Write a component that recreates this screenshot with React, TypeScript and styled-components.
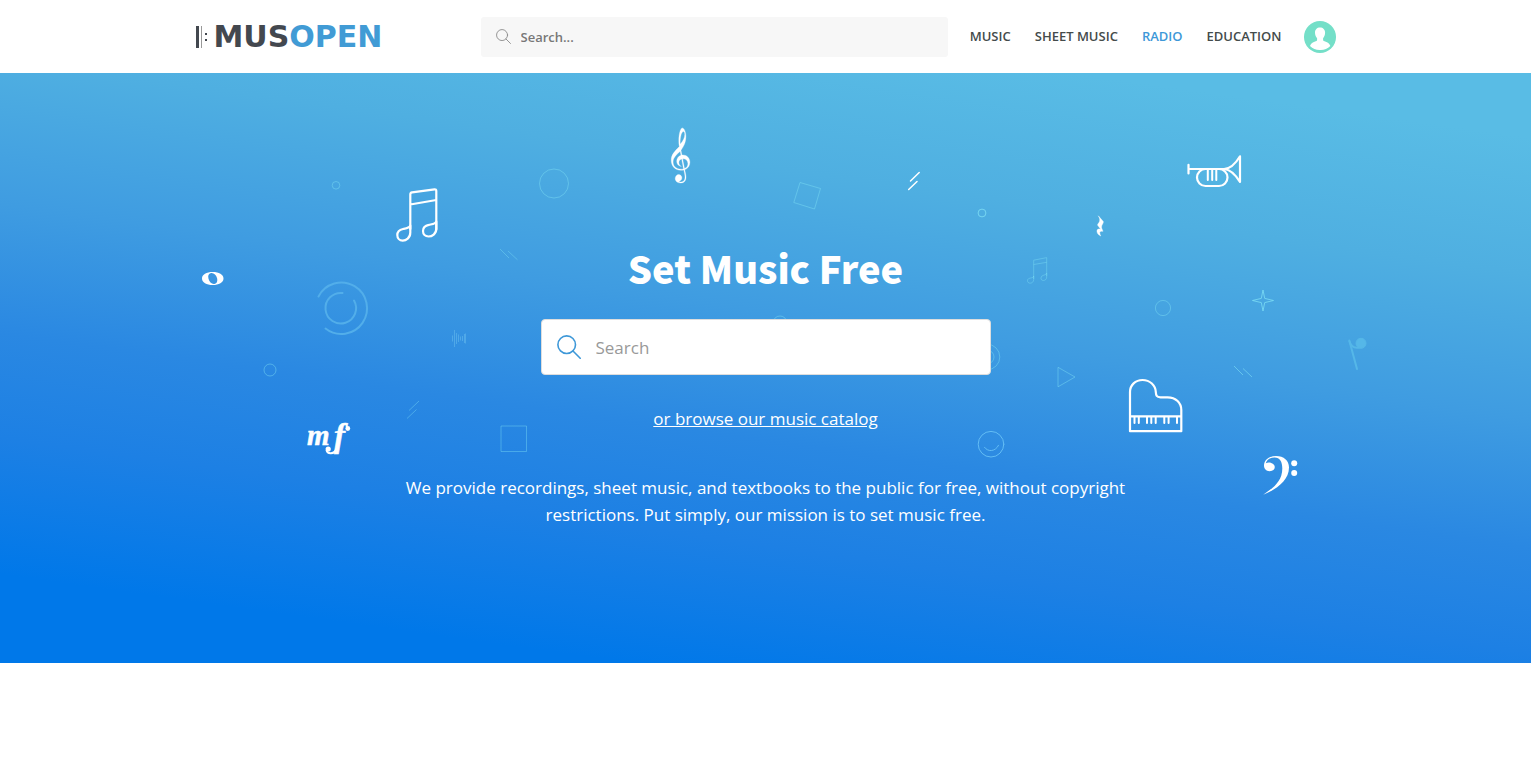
import React from 'react';
import styled, { createGlobalStyle } from 'styled-components';

const GlobalStyle = createGlobalStyle`
  *, *::before, *::after { box-sizing: border-box; }
  body {
    margin: 0;
    background: #fff;
    font-family: "Open Sans", "Noto Sans", sans-serif;
    color: #43484d;
  }
`;

const Header = styled.header`
  background: #fff;
  padding: 0 24px;
`;

const HeaderInner = styled.div`
  display: flex;
  align-items: center;
  max-width: 1140px;
  height: 73px;
  margin: 0 auto;
`;

const Brand = styled.a`
  display: flex;
  align-items: center;
  flex: 0 0 285px;
  gap: 5px;
  color: #43484f;
  text-decoration: none;
`;

const BrandMark = styled.svg`
  display: block;
  width: 13px;
  height: 22px;
`;

const BrandName = styled.span`
  font: 700 30px/36px "DejaVu Sans", Inter, sans-serif;

  b {
    font-weight: inherit;
    color: #419bd5;
  }
`;

const HeaderSearch = styled.form`
  display: flex;
  align-items: center;
  flex: 1 1 auto;
  height: 40px;
  padding: 0 15px;
  gap: 10px;
  border-radius: 3px;
  background: #f7f7f7;
`;

const HeaderInput = styled.input`
  flex: 1;
  min-width: 0;
  height: 40px;
  padding: 0;
  border: 0;
  outline: 0;
  background: transparent;
  font: 600 13px/20px "Open Sans", "Noto Sans", sans-serif;
  color: #43484d;

  &::placeholder { color: #777; opacity: 1; }
`;

const Nav = styled.nav`
  display: flex;
  align-items: center;
  gap: 24px;
  margin-left: 22px;
  padding-bottom: 2px;
`;

const NavLink = styled.a<{ $active?: boolean }>`
  font-size: 13px;
  line-height: 20px;
  font-weight: 600;
  white-space: nowrap;
  text-decoration: none;
  color: ${(p) => (p.$active ? '#3e98d8' : '#444b4b')};
`;

const AvatarButton = styled.button`
  display: block;
  width: 32px;
  height: 32px;
  margin-left: 22px;
  padding: 0;
  border: 0;
  border-radius: 50%;
  background: #74dfc8;
  overflow: hidden;
  cursor: pointer;

  svg { display: block; }
`;

const Hero = styled.section`
  position: relative;
  display: flex;
  flex-direction: column;
  align-items: center;
  min-height: 590px;
  padding: 167px 24px 120px;
  overflow: hidden;
  text-align: center;
  color: #fff;
  background: linear-gradient(
    8deg,
    #0078e9 11%,
    #1d80e4 28%,
    #2a88e2 41%,
    #3f9ce1 57%,
    #4fafe1 75%,
    #59bce5 92%
  );
`;

const Backdrop = styled.div`
  position: absolute;
  inset: 0;
  display: flex;
  justify-content: center;
  pointer-events: none;

  svg {
    flex: none;
    display: block;
    width: 1231px;
    height: 590px;
  }
`;

const HeroTitle = styled.h1`
  position: relative;
  margin: 0;
  font: 900 38px/56px "Noto Sans CJK JP", "Noto Sans CJK SC", "Open Sans", sans-serif;
`;

const HeroSearch = styled.form`
  position: relative;
  display: flex;
  align-items: center;
  width: 100%;
  max-width: 450px;
  height: 56px;
  margin-top: 23px;
  padding: 0 15px;
  gap: 15px;
  border: 1px solid #ddd;
  border-radius: 4px;
  background: #fff;
`;

const HeroInput = styled.input`
  flex: 1;
  min-width: 0;
  height: 54px;
  padding: 0;
  border: 0;
  outline: 0;
  background: transparent;
  font: 400 17px/24px "Open Sans", "Noto Sans", sans-serif;
  color: #43484d;

  &::placeholder { color: #999; opacity: 1; }
`;

const CatalogLink = styled.a`
  position: relative;
  margin-top: 30px;
  font-size: 17px;
  line-height: 27px;
  color: #fff;
  text-decoration: underline;
`;

const Mission = styled.p`
  position: relative;
  max-width: 740px;
  margin: 42px 0 0;
  font-size: 17px;
  line-height: 27px;
`;

const Magnifier = ({ size, color, weight }: { size: number; color: string; weight: number }) => (
  <svg width={size} height={size} viewBox="0 0 24 24" fill="none" stroke={color} strokeWidth={weight} strokeLinecap="round" aria-hidden="true">
    <circle cx="9.7" cy="9.7" r="8.8" />
    <path d="M16 16l7.2 7.2" />
  </svg>
);

const Illustration = () => (
  <svg viewBox="150 73 1231 590" fill="none" aria-hidden="true">
    <g stroke="#fff" strokeWidth="2.2" strokeLinecap="round" strokeLinejoin="round">
      {/* beamed notes */}
      <path d="M410.300 229 V194.500 q0-1.800 1.800-2.100 L434.500 189.300 q1.800-.2 1.800 1.600 V229.500 M410.300 204.500 L436.300 200" />
      <path d="M410.300 225.500 V232.500 C410.300 238 406 240.600 402.700 240.600 C399.500 240.600 397.300 238.400 397.300 235 C397.300 231.500 399.500 229.800 403 229 C407 228.200 409.800 227.800 410.300 225.500z" />
      <path d="M436.300 221.500 V228.500 C436.300 234 432 236.500 428.500 236.500 C425.300 236.500 423 234.300 423 231 C423 227.500 425.300 225.600 428.800 224.900 C432.800 224 435.800 223.800 436.300 221.500z" />
      {/* trumpet */}
      <path d="M1188.500 164.800v8.600 M1188.500 169H1224 C1231.500 168.800 1236 163 1240 156.300 V182 C1236 175.500 1231.500 169.500 1224 169" />
      <rect x="1197" y="169" width="30.500" height="17" rx="8.500" />
      <path d="M1207.800 169.500v10.500 M1212.200 169.500v10.500 M1216.300 169.500v10.500" strokeWidth="2" />
      {/* grand piano */}
      <path d="M1130 392 C1130 385 1135.500 380 1142.500 380 C1150 380 1155.500 385.500 1155.800 392 C1156 395.500 1156.500 397.300 1160.500 397.300 H1167.500 C1176 397.300 1181.300 403 1181.300 410 V431.200 H1130z M1130 416.300H1181" />
      <path d="M1134.500 417v6 M1138.800 417v6 M1147 417v6 M1151.300 417v6 M1155.700 417v6 M1164.300 417v6 M1168.600 417v6 M1177 417v6" strokeWidth="2" />
      <path d="M910.500 181l8.700-8.500 M908.700 189.500l8.300-8" strokeWidth="1.500" />
    </g>

    <g fill="#fff">
      {/* whole note */}
      <path fillRule="evenodd" d="M212.700 272 C219 272 223.500 274.500 223.500 278.500 C223.500 282.500 219 285 212.700 285 C206.500 285 202 282.500 202 278.500 C202 274.500 206.500 272 212.700 272z M211 273.100 C208.500 273.500 207.700 275.800 208.500 278.800 C209.300 282 211.600 284.200 214.300 283.900 C217 283.600 217.800 281 217 278 C216.200 275 213.800 272.700 211 273.100z" />
      {/* treble clef */}
      <path stroke="#fff" strokeWidth=".3" fillRule="evenodd" d="M681.900 127.900 C684.200 127.700 685.900 132 685.900 136.500 C685.900 142.500 683.600 146.400 681 150.300 L681.900 155 C686.900 154.500 689.900 158.200 689.900 162.300 C689.900 166 687.800 168.600 684.700 169.700 C685.500 173 686 175.300 686 177.200 C686 180.900 684 183 680.500 183 C677.400 183 675.200 181.100 675.200 178.600 C675.200 176.200 676.900 174.500 678.700 174.500 C680.500 174.500 681.900 175.900 681.900 177.800 C681.900 179.600 680.700 181 679 181.200 C679.700 182 680.500 182.100 681.200 182 C684 181.700 685 180 685 177.100 C685 175.300 684.500 173 683.800 170 C676.500 171.600 671.200 167 671.200 160.300 C671.200 154.700 674.700 151.200 679.300 146.600 C678.900 144.500 678.700 142.500 678.800 140.500 C678.900 133.500 680.300 129.300 681.900 127.900z M683.200 131.500 C681.100 132.300 679.900 138.500 680.200 144.300 C683.200 140.800 684.700 137.800 684.800 134.500 C684.800 132.500 684.200 131.200 683.200 131.500z M680.200 151.300 C675.800 155.200 673 158.300 673.100 162.200 C673.200 167.200 677.800 170 683.500 168.900 L681.700 159 C679.300 159.500 678.500 161.600 679 163.500 C679.300 164.900 680.200 165.800 681.400 166.500 C678.200 166 676.700 163.900 676.700 161.300 C676.700 158.300 678.500 156 681 155.200z M682.600 158.900 L684.500 168.600 C686.900 167.600 688.100 165.800 687.900 163.300 C687.700 160.500 685.500 158.500 682.600 158.900z" />
      {/* quarter rest */}
      <path stroke="#fff" strokeWidth=".4" d="M1098.300 215.800 L1103.300 221.500 C1103.800 223 1101.500 225 1101.500 227 C1101.500 228.500 1102.500 229.700 1103 231.300 C1100.700 230.800 1099.500 231.500 1099.800 233 C1100 234.300 1100.300 235.200 1100.800 236 C1098.300 235 1096.500 232.500 1097 230.500 C1097.400 229 1099 228.700 1100.700 229.300 L1097.500 225 C1098 223.500 1099.800 222 1099.800 220 C1099.800 218.500 1099 217 1098.300 215.800z" />
      {/* bass clef */}
      <path d="M1263.200 494.800 C1272 488.800 1282.300 482 1282.300 468.500 C1282.300 461.500 1280 457.400 1274.500 457.400 C1270 457.400 1266.500 459.700 1265.800 463.300 C1267.200 462.600 1268.300 462.500 1269.500 462.600 C1272.500 462.700 1274.800 464.500 1274.800 467 C1274.800 469.600 1272.500 471.200 1269.500 471.200 C1266.200 471.200 1264 469 1264 465.600 C1264 460 1269.200 456 1276 456 C1283.800 456 1289 460.500 1289 467.500 C1289 481 1275.500 489.800 1263.200 494.800z" />
      <circle cx="1294.200" cy="463.200" r="3" />
      <circle cx="1294.200" cy="473" r="3" />
      {/* mezzo-forte mark with its round terminals */}
      <text x="307" y="445" fontFamily="Liberation Serif, serif" fontSize="29" fontWeight="700" fontStyle="italic" stroke="#fff" strokeWidth=".5">
        m<tspan x="334" y="447" fontSize="33">f</tspan>
      </text>
      <circle cx="347.800" cy="428.500" r="2.400" />
      <circle cx="328.200" cy="449" r="2.600" />
      <path d="M326.500 450C327.500 454.500 334 455 337 448" stroke="#fff" strokeWidth="2" fill="none" />
    </g>

    <g stroke="#7fe0f5" strokeWidth="1" strokeOpacity=".45" strokeLinejoin="round">
      <circle cx="336" cy="185.300" r="3.800" />
      <circle cx="554" cy="183.500" r="14.500" />
      <path d="M800 182.500l20.500 6-6 20.500-20.700-6.500z" />
      <circle cx="982" cy="213" r="3.900" strokeOpacity=".8" />
      <circle cx="1163" cy="308" r="7.600" />
      <circle cx="270" cy="370" r="6" />
      <circle cx="780" cy="323" r="7" />
      <circle cx="987" cy="357" r="12.800" />
      <circle cx="987" cy="357" r="7" />
      <path d="M1058 367.300v19.500l17-9.800z" />
      <path d="M1263 290l1.700 8.400 8.800 2.100-8.800 2.100-1.700 8.400-1.700-8.400-8.800-2.100 8.800-2.100z" strokeOpacity=".75" />
      <path d="M500 249l9 9 M508 251l9.500 8.800" strokeOpacity=".4" />
      <path d="M409 410.500l10-9.500 M407 418.500l9.500-9" strokeOpacity=".4" />
      <path d="M1234 366l9 9 M1243 368.500l9 8.500" strokeOpacity=".6" />
      <rect x="501" y="426" width="25.500" height="25.500" strokeOpacity=".4" />
      <path d="M1033.700 279V260.200l13-2.600v18.500 M1033.700 264.500l13-2.200" strokeOpacity=".4" />
      <path d="M1033.700 276v3.500c0 2.500-2 3.700-3.600 3.700s-2.600-1-2.600-2.600c0-3.500 6-1.800 6.200-4.600z M1046.700 273v4c0 2.500-2 3.500-3.400 3.500s-2.400-1-2.400-2.500c0-3.500 5.500-2.200 5.800-5z" strokeOpacity=".4" />
    </g>

    <g stroke="#63bdf5" strokeLinecap="round">
      <circle cx="991" cy="444.200" r="12.800" strokeWidth="1" />
      <path d="M984.500 447.300c3 4.500 10.500 5 14-2" strokeWidth="1" />
      <path d="M318.500 296.500A25.700 25.700 0 1 1 325.500 328.500" stroke="#52aeea" strokeWidth="2" />
      <path d="M342.500 293A15.300 15.300 0 1 0 354 300.500" stroke="#52aeea" strokeWidth="2" />
    </g>

    {/* sound wave */}
    <path d="M452.500 335.500v6M454.500 330v17M456.500 333v11M458.500 334.500v7.500M460.500 336.500v4M462.500 336v5M464.500 334v9M465.500 333.500v10" stroke="#4fa8e8" strokeWidth="1" />

    {/* eighth rest */}
    <g stroke="#55b7e8" fill="#55b7e8">
      <circle cx="1361" cy="343.300" r="5" />
      <path d="M1349.300 340.500L1357 369" strokeWidth="2" strokeLinecap="round" />
      <path d="M1349.300 341c1.500 5.500 5.500 7.500 10.500 6.500" fill="none" strokeWidth="2" />
    </g>
  </svg>
);

export default function App() {
  return (
    <>
      <GlobalStyle />
      <Header>
        <HeaderInner>
          <Brand href="#" aria-label="Musopen home">
            <BrandMark viewBox="0 0 13 22" aria-hidden="true">
              <path d="M0 0h3v22H0z" fill="#43484f" />
              <path d="M5 0h1v22H5z" fill="#999" />
              <path d="M9 7h2v2H9zM9 13h2v2H9z" fill="#43484f" />
            </BrandMark>
            <BrandName>MUS<b>OPEN</b></BrandName>
          </Brand>
          <HeaderSearch role="search">
            <Magnifier size={15} color="#888" weight={1.4} />
            <HeaderInput type="text" placeholder="Search..." aria-label="Search the site" />
          </HeaderSearch>
          <Nav aria-label="Main">
            <NavLink href="#music">MUSIC</NavLink>
            <NavLink href="#sheetmusic">SHEET MUSIC</NavLink>
            <NavLink href="#radio" $active>RADIO</NavLink>
            <NavLink href="#education">EDUCATION</NavLink>
          </Nav>
          <AvatarButton type="button" aria-label="Account">
            <svg width="32" height="32" viewBox="0 0 32 32" fill="#fff" aria-hidden="true">
              <path d="M16 6.500c3 0 5.100 2 5.100 5.300 0 2-.8 4.200-2 5.400v1.600c0 1 .8 1.400 2.700 2 2.500.9 4 2.500 4.500 4.200A13.600 13.600 0 0 1 16 29 13.600 13.600 0 0 1 6 25c.5-1.700 2-3.300 4.500-4.200 1.900-.6 2.600-1 2.600-2v-1.600c-1.300-1.200-2.100-3.400-2.100-5.400 0-3.300 2-5.300 5-5.300z" />
            </svg>
          </AvatarButton>
        </HeaderInner>
      </Header>
      <main>
        <Hero>
          <Backdrop><Illustration /></Backdrop>
          <HeroTitle>Set Music Free</HeroTitle>
          <HeroSearch role="search">
            <Magnifier size={24} color="#3e98d8" weight={1.6} />
            <HeroInput type="text" placeholder="Search" aria-label="Search music" />
          </HeroSearch>
          <CatalogLink href="#catalog">or browse our music catalog</CatalogLink>
          <Mission>
            We provide recordings, sheet music, and textbooks to the public for free, without
            copyright restrictions. Put simply, our mission is to set music free.
          </Mission>
        </Hero>
      </main>
    </>
  );
}
